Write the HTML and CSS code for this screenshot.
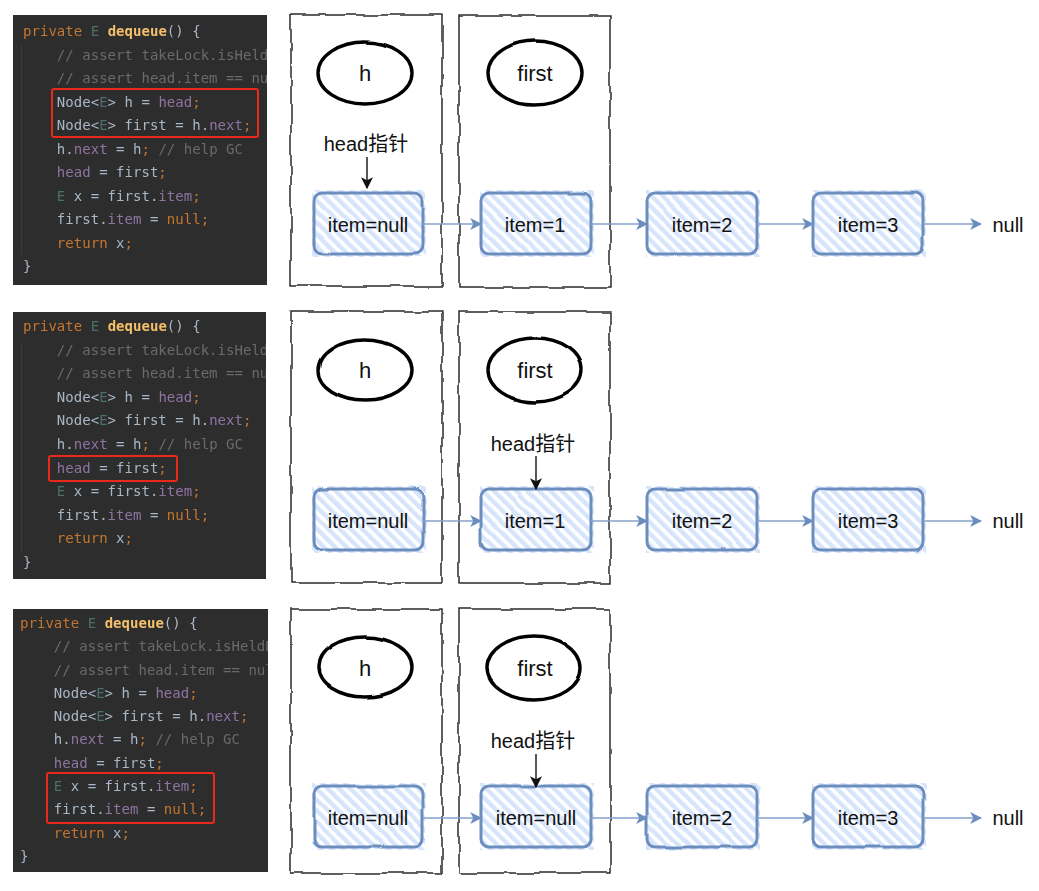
FILE: index.html
```html
<!DOCTYPE html>
<html lang="zh-CN">
<head>
<meta charset="utf-8">
<title>LinkedBlockingQueue dequeue</title>
<link rel="stylesheet" href="styles.css">
</head>
<body>
<main class="page">

<section class="row row-one">
<div class="code code-one">
<pre class="source"><span class="kw">private</span> <span class="ty">E</span> <span class="fn">dequeue</span>() {
    <span class="cm">// assert takeLock.isHeldByCurrentThread();</span>
    <span class="cm">// assert head.item == null;</span>
    Node&lt;<span class="ty">E</span>&gt; h = <span class="fd">head</span><span class="kw">;</span>
    Node&lt;<span class="ty">E</span>&gt; first = h.<span class="fd">next</span><span class="kw">;</span>
    h.<span class="fd">next</span> = h<span class="kw">;</span> <span class="cm">// help GC</span>
    <span class="fd">head</span> = first<span class="kw">;</span>
    <span class="ty">E</span> x = first.<span class="fd">item</span><span class="kw">;</span>
    first.<span class="fd">item</span> = <span class="kw">null;</span>
    <span class="kw">return</span> x<span class="kw">;</span>
}</pre>
<div class="guide"></div>
<div class="mark mark-one"></div>
</div>
<svg class="diagram" viewBox="290 0 749 300" width="749" height="300" aria-label="step one">
<defs>
<pattern id="hatch" width="8" height="8" patternUnits="userSpaceOnUse" patternTransform="rotate(-45)"><rect width="4.4" height="8" fill="#d6e5fb"/></pattern>
<filter id="rough-a" x="-5%" y="-5%" width="110%" height="110%" color-interpolation-filters="sRGB"><feTurbulence type="fractalNoise" baseFrequency="0.05" numOctaves="1" seed="3"/><feDisplacementMap in="SourceGraphic" scale="5" xChannelSelector="R" yChannelSelector="G"/></filter>
<filter id="rough-b" x="-5%" y="-5%" width="110%" height="110%" color-interpolation-filters="sRGB"><feTurbulence type="fractalNoise" baseFrequency="0.05" numOctaves="1" seed="11"/><feDisplacementMap in="SourceGraphic" scale="5" xChannelSelector="R" yChannelSelector="G"/></filter>
<filter id="rough-c" x="-5%" y="-5%" width="110%" height="110%" color-interpolation-filters="sRGB"><feTurbulence type="fractalNoise" baseFrequency="0.05" numOctaves="1" seed="23"/><feDisplacementMap in="SourceGraphic" scale="5" xChannelSelector="R" yChannelSelector="G"/></filter>
<filter id="soft" x="-5%" y="-5%" width="110%" height="110%" color-interpolation-filters="sRGB"><feTurbulence type="fractalNoise" baseFrequency="0.02" numOctaves="1" seed="7"/><feDisplacementMap in="SourceGraphic" scale="3" xChannelSelector="R" yChannelSelector="G"/></filter>
<marker id="tip-blue" viewBox="0 0 10 10" refX="9" refY="5" markerWidth="12" markerHeight="12" markerUnits="userSpaceOnUse" orient="auto"><path d="M0 0L10 5L0 10L2.5 5Z" fill="#6c8ebf"/></marker>
<marker id="tip-black" viewBox="0 0 10 10" refX="9" refY="5" markerWidth="12" markerHeight="12" markerUnits="userSpaceOnUse" orient="auto"><path d="M0 0L10 5L0 10L2.5 5Z" fill="#111"/></marker>
</defs>
<g class="rough-a">
<rect class="lane" x="291" y="15" width="151" height="271"/>
<rect class="lane" x="459" y="16" width="151" height="271"/>
</g>
<g class="soft">
<ellipse class="var" cx="365" cy="73" rx="47" ry="31"/>
<ellipse class="var" cx="535" cy="73" rx="47" ry="32"/>
<rect class="hatch" x="312" y="190" width="114" height="67"/>
<rect class="hatch" x="480" y="190" width="114" height="67"/>
<rect class="hatch" x="646" y="190" width="114" height="67"/>
<rect class="hatch" x="812" y="190" width="114" height="67"/>
<rect class="node" x="314" y="193" width="109" height="61" rx="8"/>
<rect class="node" x="481" y="193" width="110" height="61" rx="8"/>
<rect class="node" x="647" y="193" width="110" height="61" rx="8"/>
<rect class="node" x="813" y="193" width="110" height="61" rx="8"/>
</g>
<text class="big" x="365" y="73">h</text>
<text class="big" x="535" y="73">first</text>
<text class="label" x="366" y="144">head指针</text>
<line class="ptr" x1="367" y1="157" x2="367" y2="188"/>
<line class="link" x1="423" y1="224" x2="481" y2="224"/>
<line class="link" x1="591" y1="224" x2="647" y2="224"/>
<line class="link" x1="757" y1="224" x2="813" y2="224"/>
<line class="link" x1="923" y1="224" x2="981" y2="224"/>
<text class="label" x="368" y="225">item=null</text>
<text class="label" x="535" y="225">item=1</text>
<text class="label" x="702" y="225">item=2</text>
<text class="label" x="868" y="225">item=3</text>
<text class="label" x="1008" y="225">null</text>
</svg>
</section>

<section class="row row-two">
<div class="code code-two">
<pre class="source"><span class="kw">private</span> <span class="ty">E</span> <span class="fn">dequeue</span>() {
    <span class="cm">// assert takeLock.isHeldByCurrentThread();</span>
    <span class="cm">// assert head.item == null;</span>
    Node&lt;<span class="ty">E</span>&gt; h = <span class="fd">head</span><span class="kw">;</span>
    Node&lt;<span class="ty">E</span>&gt; first = h.<span class="fd">next</span><span class="kw">;</span>
    h.<span class="fd">next</span> = h<span class="kw">;</span> <span class="cm">// help GC</span>
    <span class="fd">head</span> = first<span class="kw">;</span>
    <span class="ty">E</span> x = first.<span class="fd">item</span><span class="kw">;</span>
    first.<span class="fd">item</span> = <span class="kw">null;</span>
    <span class="kw">return</span> x<span class="kw">;</span>
}</pre>
<div class="guide"></div>
<div class="mark mark-two"></div>
</div>
<svg class="diagram" viewBox="290 300 749 300" width="749" height="300" aria-label="step two">
<g class="rough-b">
<rect class="lane" x="291" y="312" width="151" height="271"/>
<rect class="lane" x="459" y="312" width="151" height="271"/>
</g>
<g class="soft">
<ellipse class="var" cx="365" cy="370" rx="47" ry="30"/>
<ellipse class="var" cx="535" cy="370" rx="47" ry="32"/>
<rect class="hatch" x="312" y="486" width="114" height="67"/>
<rect class="hatch" x="480" y="486" width="114" height="67"/>
<rect class="hatch" x="646" y="486" width="114" height="67"/>
<rect class="hatch" x="812" y="486" width="114" height="67"/>
<rect class="node" x="314" y="489" width="109" height="61" rx="8"/>
<rect class="node" x="481" y="489" width="110" height="61" rx="8"/>
<rect class="node" x="647" y="489" width="110" height="61" rx="8"/>
<rect class="node" x="813" y="489" width="110" height="61" rx="8"/>
</g>
<text class="big" x="365" y="370">h</text>
<text class="big" x="535" y="370">first</text>
<text class="label" x="533" y="444">head指针</text>
<line class="ptr" x1="536" y1="456" x2="536" y2="489"/>
<line class="link" x1="423" y1="521" x2="481" y2="521"/>
<line class="link" x1="591" y1="521" x2="647" y2="521"/>
<line class="link" x1="757" y1="521" x2="813" y2="521"/>
<line class="link" x1="923" y1="521" x2="981" y2="521"/>
<text class="label" x="368" y="521">item=null</text>
<text class="label" x="535" y="521">item=1</text>
<text class="label" x="702" y="521">item=2</text>
<text class="label" x="868" y="521">item=3</text>
<text class="label" x="1008" y="521">null</text>
</svg>
</section>

<section class="row row-three">
<div class="code code-three">
<pre class="source"><span class="kw">private</span> <span class="ty">E</span> <span class="fn">dequeue</span>() {
    <span class="cm">// assert takeLock.isHeldByCurrentThread();</span>
    <span class="cm">// assert head.item == null;</span>
    Node&lt;<span class="ty">E</span>&gt; h = <span class="fd">head</span><span class="kw">;</span>
    Node&lt;<span class="ty">E</span>&gt; first = h.<span class="fd">next</span><span class="kw">;</span>
    h.<span class="fd">next</span> = h<span class="kw">;</span> <span class="cm">// help GC</span>
    <span class="fd">head</span> = first<span class="kw">;</span>
    <span class="ty">E</span> x = first.<span class="fd">item</span><span class="kw">;</span>
    first.<span class="fd">item</span> = <span class="kw">null;</span>
    <span class="kw">return</span> x<span class="kw">;</span>
}</pre>
<div class="mark mark-three"></div>
</div>
<svg class="diagram" viewBox="290 600 749 291" width="749" height="291" aria-label="step three">
<g class="rough-c">
<rect class="lane" x="291" y="609" width="151" height="264"/>
<rect class="lane" x="459" y="609" width="151" height="264"/>
</g>
<g class="soft">
<ellipse class="var" cx="365" cy="667" rx="47" ry="30"/>
<ellipse class="var" cx="534" cy="668" rx="47" ry="32"/>
<rect class="hatch" x="312" y="783" width="114" height="67"/>
<rect class="hatch" x="480" y="783" width="114" height="67"/>
<rect class="hatch" x="646" y="783" width="114" height="67"/>
<rect class="hatch" x="812" y="783" width="114" height="67"/>
<rect class="node" x="314" y="786" width="109" height="61" rx="8"/>
<rect class="node" x="481" y="786" width="110" height="61" rx="8"/>
<rect class="node" x="647" y="786" width="110" height="61" rx="8"/>
<rect class="node" x="813" y="786" width="110" height="61" rx="8"/>
</g>
<text class="big" x="365" y="668">h</text>
<text class="big" x="535" y="668">first</text>
<text class="label" x="533" y="741">head指针</text>
<line class="ptr" x1="536" y1="754" x2="536" y2="787"/>
<line class="link" x1="423" y1="818" x2="481" y2="818"/>
<line class="link" x1="591" y1="818" x2="647" y2="818"/>
<line class="link" x1="757" y1="818" x2="813" y2="818"/>
<line class="link" x1="923" y1="818" x2="981" y2="818"/>
<text class="label" x="368" y="818">item=null</text>
<text class="label" x="536" y="818">item=null</text>
<text class="label" x="702" y="818">item=2</text>
<text class="label" x="868" y="818">item=3</text>
<text class="label" x="1008" y="818">null</text>
</svg>
</section>

</main>
</body>
</html>
```
FILE: styles.css
```css
html, body {
  margin: 0;
  padding: 0;
  background: #fff;
}

.page {
  display: flex;
  flex-direction: column;
  width: 1039px;
  height: 891px;
  overflow: hidden;
}

.row {
  display: grid;
  grid-template-columns: 290px 749px;
  align-items: start;
}

.row-one, .row-two { height: 300px; }
.row-three { height: 291px; }

.code {
  position: relative;
  margin-left: 13px;
  overflow: hidden;
  background: #2d2d2d;
}

.code-one { width: 254px; height: 270px; margin-top: 15px; --lh: 23.5px; --pt: 5px; --pl: 10px; }
.code-two { width: 253px; height: 267px; margin-top: 12px; --lh: 23.6px; --pt: 3px; --pl: 10px; }
.code-three { width: 255px; height: 263px; margin-top: 9px; --lh: 23.3px; --pt: 3px; --pl: 7px; }

.source {
  margin: 0;
  padding: var(--pt) 0 0 var(--pl);
  font-family: "DejaVu Sans Mono", "Liberation Mono", monospace;
  font-size: 14px;
  line-height: var(--lh);
  letter-spacing: 0.03px;
  color: #a9b7c6;
  white-space: pre;
  filter: blur(0.5px);
}

.kw { color: #c4762f; }
.ty { color: #4b6f69; }
.fn { color: #f5c06a; font-weight: bold; }
.cm { color: #6a6a6a; }
.fd { color: #8f74a3; }

.guide {
  position: absolute;
  left: 8px;
  top: 30px;
  width: 1px;
  height: 210px;
  background: #3a3a3a;
}

.mark {
  position: absolute;
  box-sizing: border-box;
  border: 2.5px solid #e8291c;
  border-radius: 3px;
}

.mark-one { left: 38px; top: 73px; width: 208px; height: 50px; }
.mark-two { left: 35px; top: 143px; width: 130px; height: 27px; }
.mark-three { left: 33px; top: 163px; width: 169px; height: 52px; }

.diagram {
  display: block;
  overflow: visible;
}

.rough-a { filter: url(#rough-a); }
.rough-b { filter: url(#rough-b); }
.rough-c { filter: url(#rough-c); }
.soft { filter: url(#soft); }

.lane {
  fill: none;
  stroke: #1c1c1c;
  stroke-width: 1.4;
}

.var {
  fill: none;
  stroke: #000;
  stroke-width: 3.4;
}

.hatch {
  fill: url(#hatch);
  stroke: none;
}

.node {
  fill: none;
  stroke: #6c8ebf;
  stroke-width: 3;
}

.link {
  stroke: #86a2ca;
  stroke-width: 1.6;
  marker-end: url(#tip-blue);
}

.ptr {
  stroke: #111;
  stroke-width: 1.4;
  marker-end: url(#tip-black);
}

.big, .label {
  font-family: "Liberation Sans", "Noto Sans CJK SC", sans-serif;
  fill: #111;
  text-anchor: middle;
  dominant-baseline: central;
}

.big { font-size: 22px; }
.label { font-size: 20px; }
```
